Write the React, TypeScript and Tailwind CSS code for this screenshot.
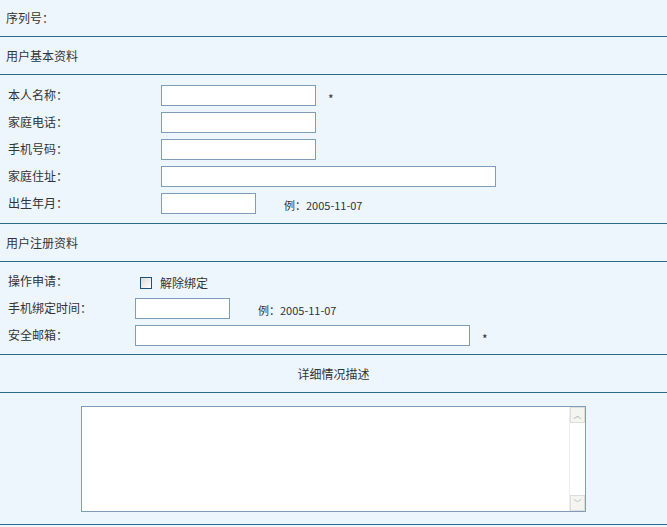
const font = { fontFamily: '"Noto Sans CJK SC", "Liberation Sans", sans-serif' };

function Field({ label, width, star, hint, labelW = "w-[161px]" }: { label: string; width: string; star?: boolean; hint?: boolean; labelW?: string }) {
  return (
    <div className="flex h-[27px] items-center">
      <div className={`${labelW} shrink-0 pl-2`}>{label}：</div>
      <input className={`${width} h-[21px] border border-[#7f9db9] bg-white`} />
      {star && <span className="ml-3 mt-2">*</span>}
      {hint && <span className="ml-7 mt-1 text-[11px]">例：2005-11-07</span>}
    </div>
  );
}

export default function App() {
  return (
    <div style={font} className="h-[527px] w-[667px] bg-[#eef6fd] text-[12px] text-[#333]">
      <div className="flex h-[37px] items-center border-b border-[#2a6b85] pl-[6px]">序列号：</div>
      <div className="flex h-[38px] items-center border-b border-[#2a6b85] pl-[6px]">用户基本资料</div>
      <div className="flex h-[149px] flex-col justify-center border-b border-[#2a6b85]">
        <Field label="本人名称" width="w-[155px]" star />
        <Field label="家庭电话" width="w-[155px]" />
        <Field label="手机号码" width="w-[155px]" />
        <Field label="家庭住址" width="w-[335px]" />
        <Field label="出生年月" width="w-[95px]" hint />
      </div>
      <div className="flex h-[38px] items-center border-b border-[#2a6b85] pl-[6px]">用户注册资料</div>
      <div className="flex h-[93px] flex-col justify-center border-b border-[#2a6b85]">
        <div className="flex h-[27px] items-center">
          <div className="w-[140px] shrink-0 pl-2">操作申请：</div>
          <span className="mt-1 h-[12px] w-[12px] border border-[#1c5180] bg-gradient-to-br from-[#dcdcd7] to-white" />
          <span className="ml-2 mt-1">解除绑定</span>
        </div>
        <Field label="手机绑定时间" width="w-[95px]" hint labelW="w-[135px]" />
        <Field label="安全邮箱" width="w-[335px]" star labelW="w-[135px]" />
      </div>
      <div className="flex h-[38px] items-center justify-center border-b border-[#2a6b85]">详细情况描述</div>
      <div className="flex h-[132px] border-b border-[#2a6b85] pl-[81px] pt-[13px]">
        <div className="relative h-[106px] w-[505px]">
          <textarea className="h-full w-full resize-none border border-[#7f9db9] bg-white pr-[18px]" />
          <div className="absolute right-px top-px flex h-[104px] w-[16px] flex-col justify-between border-l border-[#eee] bg-white">
            <span className="flex h-[16px] items-center justify-center border border-[#ddd] bg-[#f4f4f0] text-[8px] text-[#aaa]">︿</span>
            <span className="flex h-[16px] items-center justify-center border border-[#ddd] bg-[#f4f4f0] text-[8px] text-[#aaa]">﹀</span>
          </div>
        </div>
      </div>
    </div>
  );
}
